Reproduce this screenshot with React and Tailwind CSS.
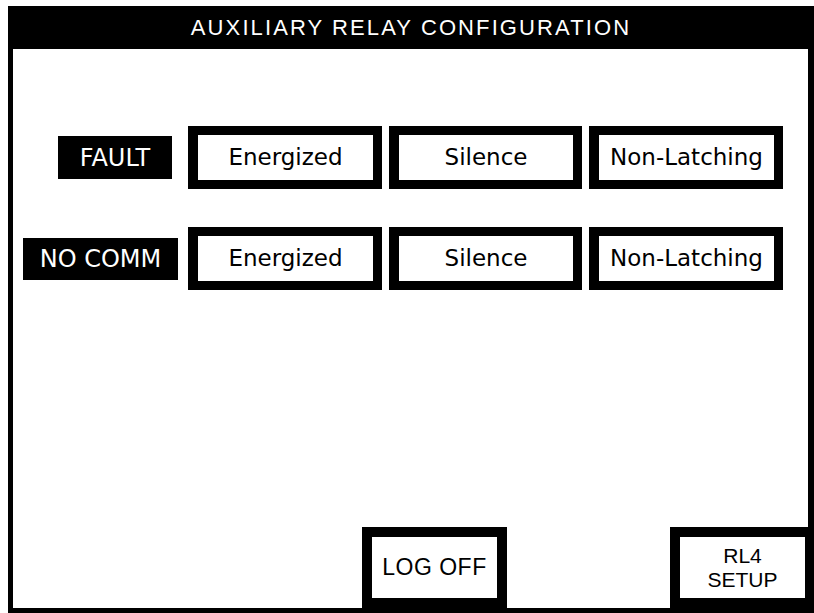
import React from 'react';

const ROWS = [
  { label: 'FAULT', labelClass: 'w-[114px] h-[43px] mr-[16px]' },
  { label: 'NO COMM', labelClass: 'w-[155px] h-[42px] mr-[10px]' },
];

const OPTIONS = [
  { text: 'Energized', w: 'w-[194px]' },
  { text: 'Silence', w: 'w-[193px]' },
  { text: 'Non-Latching', w: 'w-[194px]' },
];

function OptionButton({ text, w }) {
  return (
    <button
      className={`${w} h-[63px] border-[9px] border-l-[10px] border-black bg-white flex items-center justify-center text-[23px] text-black font-['DejaVu_Sans',sans-serif]`}
    >
      {text}
    </button>
  );
}

function RelayRow({ label, labelClass }) {
  return (
    <div className="flex items-center h-[63px]">
      <div className="w-[175px] flex justify-end">
        <div
          className={`${labelClass} bg-black text-white flex items-center justify-center text-[24px] font-['DejaVu_Sans',sans-serif]`}
        >
          {label}
        </div>
      </div>
      <div className="flex gap-[7px]">
        {OPTIONS.map((o) => (
          <OptionButton key={o.text} text={o.text} w={o.w} />
        ))}
      </div>
    </div>
  );
}

export default function App() {
  return (
    <div className="min-h-screen bg-white pt-[6px] pl-[8px]">
      <div className="w-[806px] h-[607px] flex flex-col">
        <div className="h-[43px] bg-black text-white flex items-center justify-center text-[22px] tracking-[2.1px] font-['Liberation_Sans',Arial,sans-serif]">
          AUXILIARY RELAY CONFIGURATION
        </div>
        <div className="flex-1 border-l-[5px] border-r-[6px] border-b-[5px] border-black bg-white flex flex-col">
          <div className="pt-[77px] flex flex-col gap-[38px]">
            {ROWS.map((r) => (
              <RelayRow key={r.label} label={r.label} labelClass={r.labelClass} />
            ))}
          </div>
          <div className="flex-1" />
          <div className="flex items-end font-['Liberation_Sans',Arial,sans-serif] text-black">
            <button className="ml-[349px] w-[145px] h-[81px] border-[10px] border-black bg-white flex items-center justify-center text-[23px] tracking-[0.5px]">
              LOG OFF
            </button>
            <div className="flex-1" />
            <button className="w-[138px] h-[81px] border-[10px] border-r-[3px] border-black bg-white flex flex-col items-center justify-center text-[21px] leading-6">
              <span>RL4</span>
              <span>SETUP</span>
            </button>
          </div>
        </div>
      </div>
    </div>
  );
}
